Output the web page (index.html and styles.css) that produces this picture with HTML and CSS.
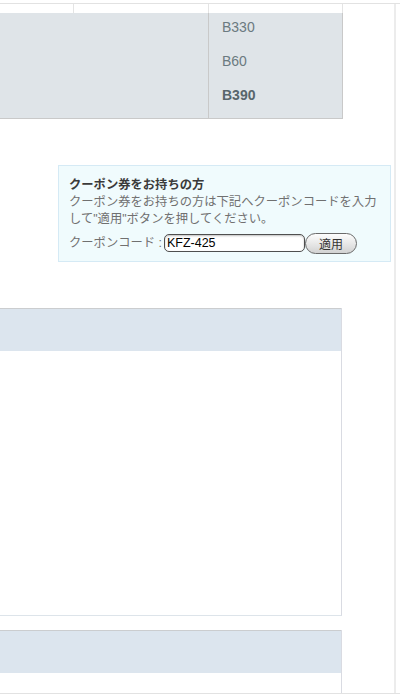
FILE: index.html
```html
<!DOCTYPE html>
<html lang="ja">
<head>
<meta charset="UTF-8">
<meta name="viewport" content="width=device-width, initial-scale=1.0">
<title>カート</title>
<link rel="stylesheet" href="styles.css">
</head>
<body>

<div class="frame">
  <div class="page">

    <div class="summary">
      <div class="summary-head">
        <div class="head-cell head-a"></div>
        <div class="head-cell head-b"></div>
        <div class="head-cell head-c"></div>
      </div>
      <div class="summary-body">
        <div class="summary-label"></div>
        <div class="summary-values">
          <div class="price">B330</div>
          <div class="price">B60</div>
          <div class="price total">B390</div>
        </div>
      </div>
    </div>

    <div class="coupon">
      <div class="coupon-title">クーポン券をお持ちの方</div>
      <p class="coupon-text">クーポン券をお持ちの方は下記へクーポンコードを入力して"適用"ボタンを押してください。</p>
      <div class="coupon-form">
        <label for="couponCode">クーポンコード :</label>
        <input id="couponCode" type="text" value="KFZ-425">
        <button type="button">適用</button>
      </div>
    </div>

    <div class="panel panel-first">
      <div class="panel-head"></div>
      <div class="panel-body"></div>
    </div>

    <div class="panel panel-second">
      <div class="panel-head"></div>
      <div class="panel-body"></div>
    </div>

  </div>
</div>

</body>
</html>
```

FILE: styles.css
```css
body {
  font-family: "Liberation Sans", "Noto Sans CJK JP", sans-serif;
  background-color: #fff;
  margin: 0;
  padding: 3px 0 0;
}
.frame {
  border-top: 1px solid #e2e2e2;
  border-bottom: 1px solid #e2e2e2;
  height: 689px;
  overflow: hidden;
}
.page {
  width: 394px;
  height: 100%;
  border-right: 2px solid #ececec;
}

/* order summary */
.summary {
  width: 343px;
}
.summary-head {
  display: grid;
  grid-template-columns: 74px 135px 134px;
  height: 9px;
}
.head-cell {
  border-right: 1px solid #e4e4e4;
}
.summary-body {
  display: grid;
  grid-template-columns: 209px 134px;
  background-color: #dfe4e8;
  border-bottom: 1px solid #c9c9c9;
  height: 105px;
}
.summary-label {
  border-right: 1px solid #c9c9c9;
}
.summary-values {
  border-right: 1px solid #c9c9c9;
  padding: 7px 0 0 13px;
  display: flex;
  flex-direction: column;
  gap: 20px;
}
.price {
  font-size: 14px;
  line-height: 14px;
  color: #6b7a80;
}
.price.total {
  font-weight: bold;
  color: #58666c;
}

/* coupon box */
.coupon {
  margin: 46px 0 0 58px;
  width: 311px;
  height: 74px;
  padding: 11px 10px 10px;
  background-color: #f0fbfd;
  border: 1px solid #d5eaf5;
  font-size: 12.3px;
  line-height: 17px;
  color: #707070;
}
.coupon-title {
  font-weight: bold;
  color: #3a3a3a;
}
.coupon-text {
  margin: 0;
}
.coupon-form {
  display: flex;
  align-items: center;
  margin-top: 4px;
}
.coupon-form label {
  margin-right: 2px;
}
.coupon-form input {
  width: 135px;
  height: 16px;
  padding: 0 2px;
  margin: 0;
  border: 1px solid #4f4f4f;
  border-radius: 5px;
  box-shadow: inset 0 1px 2px rgba(0,0,0,0.25);
  font-family: "Liberation Sans", sans-serif;
  font-size: 12.5px;
  color: #000;
}
.coupon-form button {
  width: 52px;
  height: 21px;
  margin: 1px 0 0 0;
  padding: 0;
  border: 1px solid #6a6a6a;
  border-radius: 11px;
  background: linear-gradient(#fdfdfd, #e6e6e6 55%, #d2d2d2);
  font-family: "Liberation Sans", "Noto Sans CJK JP", sans-serif;
  font-size: 12px;
  color: #333;
}

/* content panels */
.panel {
  width: 341px;
  border-right: 1px solid #d9dbe2;
}
.panel-first {
  margin-top: 46px;
  border-bottom: 1px solid #dde4ea;
}
.panel-second {
  margin-top: 14px;
}
.panel-head {
  height: 42px;
  background-color: #dce5ee;
  border-top: 1px solid #cbcdcf;
}
.panel-first .panel-body {
  height: 264px;
}
.panel-second .panel-body {
  height: 40px;
}
```
